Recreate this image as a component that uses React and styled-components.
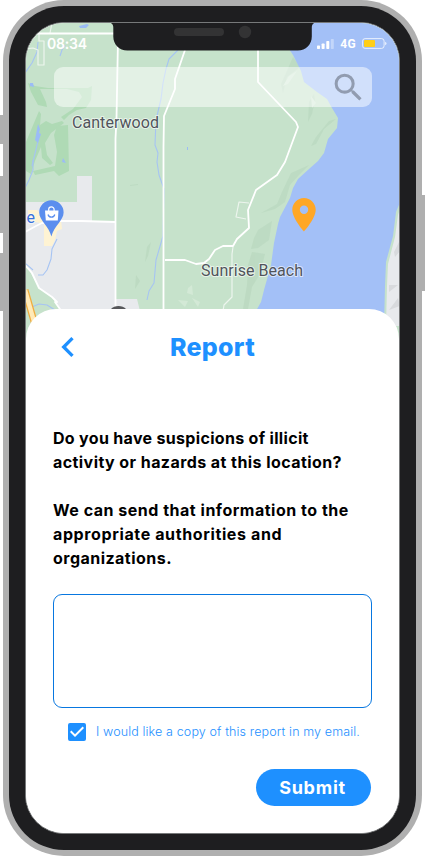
import React, { useState } from "react";
import styled, { createGlobalStyle } from "styled-components";
import { MdSearch, MdChevronLeft, MdCheckBox, MdCheckBoxOutlineBlank } from "react-icons/md";

const BLUE = "#1e90ff";

const GlobalStyle = createGlobalStyle`
  * { box-sizing: border-box; }
  body {
    margin: 0;
    background: #fff;
    font-family: Inter, "Open Sans", sans-serif;
    overflow: hidden;
  }
`;

const Stage = styled.main`
  position: relative;
  width: 425px;
  height: 856px;
  padding: 0 3px;
  overflow: hidden;
`;

const SideButton = styled.span`
  position: absolute;
  top: ${(p) => p.$top}px;
  ${(p) => p.$side}: 0;
  width: 6px;
  height: ${(p) => p.$length}px;
  background: #afafaf;
`;

const Phone = styled.div`
  position: relative;
  width: 419px;
  height: 856px;
  padding: 6px;
  border-radius: 61px;
  background: #afafaf;
`;

const Bezel = styled.div`
  height: 844px;
  padding: 16px;
  border-radius: 55px;
  background: #1e1e20;
`;

const Screen = styled.div`
  position: relative;
  height: 812px;
  display: flex;
  flex-direction: column;
  border: 1px solid #77797a;
  border-radius: 39px;
  overflow: hidden;
  background: #fff;
`;

const MapLayer = styled.svg`
  position: absolute;
  top: 0;
  left: 0;
  width: 373px;
  height: 320px;
`;

const Notch = styled.svg`
  position: absolute;
  top: -1px;
  left: 82px;
  width: 209px;
  height: 30px;
`;

const StatusBar = styled.div`
  position: relative;
  display: flex;
  justify-content: space-between;
  align-items: center;
  height: 44px;
  padding: 0 12px 3px 21px;
  color: #fff;
`;

const Clock = styled.time`
  font-size: 14px;
  font-weight: 600;
  letter-spacing: -0.2px;
  margin-top: -1px;
`;

const Signals = styled.div`
  display: flex;
  align-items: center;
  gap: 6px;
`;

const Network = styled.span`
  font: 700 12px/14px Roboto, sans-serif;
  margin-top: 1px;
  letter-spacing: 0.3px;
`;

const SearchBar = styled.div`
  position: relative;
  flex: none;
  display: flex;
  align-items: center;
  justify-content: flex-end;
  height: 40px;
  margin: 0 27px 0 28px;
  padding-right: 5px;
  border-radius: 9px;
  background: rgba(255, 255, 255, 0.5);
  color: #919cb0;
  svg { width: 37px; height: 37px; }
`;

const Sheet = styled.section`
  position: relative;
  flex: 1;
  display: flex;
  flex-direction: column;
  margin-top: 202px;
  padding: 0 27px;
  border-radius: 30px 30px 0 0;
  background: #fff;
`;

const Header = styled.header`
  display: grid;
  grid-template-columns: 40px 1fr 40px;
  align-items: center;
  height: 76px;
  color: ${BLUE};
`;

const BackButton = styled.button`
  display: flex;
  margin: 0 0 0 -5.5px;
  padding: 0;
  border: 0;
  background: none;
  color: inherit;
  svg { width: 40px; height: 40px; }
`;

const Title = styled.h1`
  margin: 0;
  text-align: center;
  font-size: 25px;
  font-weight: 800;
  line-height: 36px;
  letter-spacing: ${(p) => p.$track}px;
`;

const Prose = styled.div`
  display: flex;
  flex-direction: column;
  gap: 24px;
  margin-top: 41px;
`;

const Paragraph = styled.p`
  margin: 0;
  color: #000;
  font-size: 16px;
  font-weight: 700;
  line-height: 24px;
  white-space: nowrap;
`;

const Line = styled.span`
  display: block;
  letter-spacing: ${(p) => p.$track}px;
`;

const Message = styled.textarea`
  display: block;
  width: 319px;
  height: 114px;
  margin: 24px 0 0;
  padding: 10px;
  border: 1px solid #0877e0;
  border-radius: 9px;
  background: transparent;
  resize: none;
  outline: none;
  font: 400 14px/20px Inter, sans-serif;
`;

const CopyOption = styled.button`
  display: flex;
  align-items: center;
  gap: 7px;
  height: 24px;
  margin: 12px 0 0 12px;
  padding: 0;
  border: 0;
  background: none;
  color: ${BLUE};
  font: 300 12.5px/18px Inter, sans-serif;
  letter-spacing: ${(p) => p.$track}px;
  white-space: nowrap;
  svg { flex: none; width: 24px; height: 24px; }
`;

const Submit = styled.button`
  align-self: flex-end;
  width: 115px;
  height: 37px;
  margin: 25px 1px 0 0;
  padding: 0 2px 0 0;
  border: 0;
  border-radius: 19px;
  background: ${BLUE};
  color: #fff;
  font: 700 18px/37px Inter, sans-serif;
  letter-spacing: ${(p) => p.$track}px;
`;

const MapLabel = styled.text`
  font: 400 16px Roboto, sans-serif;
  fill: ${(p) => p.$color || "#50545b"};
  stroke: rgba(255, 255, 255, 0.6);
  stroke-width: 2px;
  stroke-linejoin: round;
  paint-order: stroke;
`;

function Map() {
  return (
    <MapLayer viewBox="26 23 373 320" fill="none" strokeLinejoin="round">
      <path fill="#c6e2cb" d="M20 20h390v330H20z" />

      {/* parks */}
      <g fill="#afdab5">
        <path d="M28 83l7 3 13 2 40 0 4-2-1 14-5 8-9 2-8 5-5 5-3-3 12-8 9-12-3-5-12-3-27 0 6 13 1 5-9-2-7-13z" />
        <path d="M39 111l2 3-1 11 6-4 6 3 10-3 2 2-13 10-6 10 2 12 6 8-3 2-8-7-1-11-6 14-4 13-5-3 0-29z" />
        <path d="M57 126l11-1 1 46-10 5-5-5-19 4-2-4 22-5 2-14-3-17z" />
      </g>

      {/* town blocks */}
      <path fill="#e8eaed" d="M26 202h51v-26h15v46h24v77h21l3 12H61l-8-13-14-10-13-24z" />
      <path fill="#fef3d3" d="M28 210h9l9 10h15l1 9-5 2-2 9-3 6h-8v-22l-16-4z" />

      {/* relief along the shore */}
      <g fill="#b9d7be" opacity=".65">
        <path d="M293 57l7 10-13 10-4 16-2-9 5-11zM314 94l-5 8-1 20 4-8 3-14zM336 119l-12 10-8 15-5 2 5-9 13-16zM309 165l-18 8-9 19-5 12-16 9 14-4 10-7 5-17 9-10zM258 230l14-9-3 19-11 8-7 1 3-11zM252 252l13 2-5 20-8 13-4 22h-5l4-24 1-20z" />
        <path d="M130 185l8-1v1l-8 1zM147 247l4-5-3 14-3 6zM136 275l4 6-5 8z" />
      </g>
      <path fill="#d3e9d6" d="M283 86l6-10 8-5-9 13zM311 96l5 7-4 5zM188 288l4-3 1 10-6-2zM178 300l10 1-3 6zM192 298l8 4-2 5z" />

      {/* sound */}
      <path
        fill="#a3c0f7"
        d="M270 20h140v300H251l10-18 3-12 7-25 3-22 4-19 2-7 10-19 3-10 5-9 11-10 9-8 6-8 4-14 9-11 1-10-6-10-5-9-10-7-13-10-3-11-8-16z"
      />
      <path fill="#c6e2cb" d="M401 200l-5 12-3 24-7 26-1 24-1 40h18z" />
      <path fill="#e8eaed" d="M401 206l-3 9-3 22-7 27-1 22-1 40h18z" />
      <path fill="#d8dadd" d="M400 240l-6 12 1 5 5-6zM389 285l9 0-9 7zM398 298l-9 12 11-4z" />

      {/* streams */}
      <g stroke="#a6c4f3" strokeWidth="1.1">
        <path d="M178 50l-9 9-3 10-3 14-2 16-5 21-1 25 3 8-1 9 2 13 5 14-1 47-7 24-2 23-5 8-2 9" />
        <path d="M38 42l-1 10-5 11-7 10M65 45l-3 5-2 6M33 160l0 10-4 10-4 8" />
        <path d="M57 239l-5 10-1 10-4 11-4 5h-5M25 263l8 7M32 307l7-3 8 1 8 5" />
        <path d="M38 141l-6 25" />
      </g>
      <g fill="#9bbcf6">
        <path d="M79 26l8-2 2 1-3 3h-6zM30 83l3 0 1 4-4-1zM38 124l2 5-1 4 2 1-3 9-3-3zM63 158l3 5-4-1z" />
        <path d="M187 147h1v3h-1z" />
      </g>

      {/* minor roads */}
      <g stroke="#edf5ee" strokeWidth="1.2">
        <path d="M39 33l0 8 5 0v24h-6V50l-5-2-8 1M52 23l-2 10" />
        <path d="M249 203l-10-1-3 15 10 2M233 247l-1 7 0 43-8 8-1 6" />
      </g>

      {/* main roads */}
      <g stroke="#fff" strokeWidth="1.8">
        <path d="M25 33.5h93v5l-1.5 80-1 20v170" />
        <path d="M185 50l-10 29 0 10-11 27-.5 30v165" />
        <path d="M25 232l11-6 6-3 17-2h22l35 1M25 265l7 8 7 15 13 9 5 5-2 0 7 10" />
        <path d="M258 48v34l38 40 2 5-13 35-8 13-21 15-8 20 1 18-12 11-4 7h-10l-8 4-6 9-5 4-8 1-11-4h-20" />
      </g>

      {/* highway */}
      <path d="M25 290l10 35" stroke="#f0ac3f" strokeWidth="7" />
      <path d="M25 290l10 35" stroke="#ffeab8" strokeWidth="4.5" />

      <circle cx="118.5" cy="317" r="11" fill="#56575a" />

      {/* shopping centre */}
      <MapLabel $color="#3871db" x="26.5" y="223">e</MapLabel>
      <path fill="#5b8eee" d="M51.4 200.2a12.2 12.2 0 0 1 12.2 12.2c0 8-9.5 13-12.2 24-2.7-11-12.2-16-12.2-24a12.2 12.2 0 0 1 12.2-12.2z" />
      <path fill="#fff" d="M45 210.5h13.5l-.7 10h-12z" />
      <path stroke="#fff" strokeWidth="1.2" d="M48.7 211v-1.5a2.7 2.7 0 0 1 5.4 0v1.5" />
      <path stroke="#5b8eee" strokeWidth="1.2" d="M48 214.5c.8 3.5 6 3.5 6.8 0" />

      <MapLabel x="72" y="128" textLength="87">Canterwood</MapLabel>
      <MapLabel x="201" y="275.5" textLength="102">Sunrise Beach</MapLabel>

      {/* reported location */}
      <path
        fill="#ffa726"
        fillRule="evenodd"
        d="M304 198c-6.5 0-11.7 5.2-11.7 11.7 0 8.7 11.7 21.7 11.7 21.7s11.7-13 11.7-21.7c0-6.5-5.2-11.7-11.7-11.7zm0 15.9a4.2 4.2 0 1 1 0-8.4 4.2 4.2 0 0 1 0 8.4z"
      />
    </MapLayer>
  );
}

function Indicators() {
  return (
    <Signals>
      <svg width="17" height="10" viewBox="0 0 17 10" fill="#fff">
        <rect y="6.5" width="3" height="3.5" rx=".7" />
        <rect x="4.6" y="4.5" width="3" height="5.5" rx=".7" />
        <rect x="9.3" y="2" width="3" height="8" rx=".7" />
        <rect x="13.8" width="3" height="10" rx=".7" opacity=".35" />
      </svg>
      <Network>4G</Network>
      <svg width="25" height="11" viewBox="0 0 25 11" fill="none">
        <rect x=".6" y=".6" width="21.5" height="9.8" rx="2.5" stroke="#fff" strokeOpacity=".75" />
        <rect x="2" y="2" width="11" height="7" rx="1" fill="#ffce18" />
        <path d="M23.3 3.7c1.5.8 1.5 2.8 0 3.6z" fill="#fff" />
      </svg>
    </Signals>
  );
}

export default function App() {
  const [copy, setCopy] = useState(true);
  return (
    <>
      <GlobalStyle />
      <Stage>
        <SideButton $side="left" $top={115} $length={29} />
        <SideButton $side="left" $top={176} $length={57} />
        <SideButton $side="left" $top={253} $length={58} />
        <SideButton $side="right" $top={195} $length={96} />
        <Phone>
          <Bezel>
            <Screen>
              <Map />
              <Notch viewBox="0 0 209 30">
                <path fill="#1e1e20" d="M0 0h209v.5c-3.5 0-5.2 1.7-5.2 5v9c0 8-6 14-14 14H19.300c-8 0-14-6-14-14v-9c0-3.300-1.800-5-5.300-5z" />
                <rect x="66" y="6" width="50" height="8" rx="4" fill="#333334" />
                <circle cx="137" cy="10" r="6.2" fill="#333334" />
              </Notch>
              <StatusBar>
                <Clock>08:34</Clock>
                <Indicators />
              </StatusBar>
              <SearchBar role="search">
                <MdSearch />
              </SearchBar>
              <Sheet>
                <Header>
                  <BackButton aria-label="Back">
                    <MdChevronLeft />
                  </BackButton>
                  <Title $track={0.3}>Report</Title>
                </Header>
                <Prose>
                  <Paragraph>
                    <Line $track={0.32}>Do you have suspicions of illicit</Line>
                    <Line $track={0.43}>activity or hazards at this location?</Line>
                  </Paragraph>
                  <Paragraph>
                    <Line $track={0.51}>We can send that information to the</Line>
                    <Line $track={0.62}>appropriate authorities and</Line>
                    <Line $track={0.47}>organizations.</Line>
                  </Paragraph>
                </Prose>
                <Message aria-label="Report details" />
                <CopyOption $track={0.13} role="checkbox" aria-checked={copy} onClick={() => setCopy(!copy)}>
                  {copy ? <MdCheckBox /> : <MdCheckBoxOutlineBlank />}
                  I would like a copy of this report in my email.
                </CopyOption>
                <Submit $track={0.75}>Submit</Submit>
              </Sheet>
            </Screen>
          </Bezel>
        </Phone>
      </Stage>
    </>
  );
}
